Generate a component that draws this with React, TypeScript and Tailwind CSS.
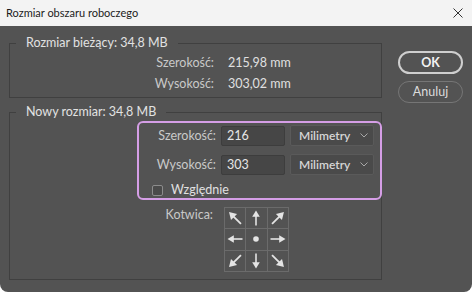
import React from "react";

// Anchor arrows: rotation in degrees for each cell, null = centre dot
const anchorCells: (number | null)[] = [-45, 0, 45, -90, null, 90, -135, 180, 135];

function AnchorArrow({ deg }: { deg: number | null }) {
  if (deg === null) {
    return (
      <svg width="14" height="14" viewBox="0 0 14 14">
        <circle cx="7" cy="7" r="2.8" fill="#e4e4e4" />
      </svg>
    );
  }
  const len = deg % 90 === 0 ? 16 : 18;
  return (
    <svg width={len} height={len} viewBox="0 0 16 16">
      <g transform={`rotate(${deg} 8 8)`}>
        <line x1="8" y1="15.5" x2="8" y2="5" stroke="#e4e4e4" strokeWidth="1.6" />
        <polygon points="8,0.5 4.2,6.8 11.8,6.8" fill="#e4e4e4" />
      </g>
    </svg>
  );
}

function Select() {
  return (
    <div className="ml-[5px] flex h-[21px] w-[84px] items-center justify-between rounded-[2px] border border-[#5a5a5a] bg-[#4a4a4a] pl-[8px] pr-[5px]">
      <span className="text-[12px] font-semibold leading-[16px] text-[#d6d6d6]">Milimetry</span>
      <svg width="8" height="5" viewBox="0 0 8 5">
        <polyline points="0.5,0.5 4,4 7.5,0.5" fill="none" stroke="#a8a8a8" strokeWidth="1" />
      </svg>
    </div>
  );
}

export default function App() {
  return (
    <div className="h-[292px] w-[472px] bg-white font-['Lato','Noto_Sans',sans-serif]">
      {/* title bar */}
      <div className="flex h-[26px] items-center justify-between bg-[#f3f3f3] pl-[6px] pr-[9px]">
        <span className="text-[11px] leading-[16px] text-[#1b1b1b]">Rozmiar obszaru roboczego</span>
        <svg width="10" height="10" viewBox="0 0 10 10">
          <path d="M0.5 0.5 L9.5 9.5 M9.5 0.5 L0.5 9.5" stroke="#333" strokeWidth="1" />
        </svg>
      </div>

      {/* body */}
      <div className="flex h-[266px] rounded-b-[8px] bg-[#535353] pl-[9px] pt-[9px] text-[12.5px] leading-[16px]">
        <div className="flex w-[373px] flex-col gap-[6px]">
          <fieldset className="border border-[#404040] pb-[3px] pt-[1px]">
            <legend className="ml-[6px] px-[10px] text-[#e2e2e2]">Rozmiar bieżący: 34,8 MB</legend>
            <div className="flex h-[21px] items-center">
              <span className="w-[204px] text-right text-[#c9c9c9]">Szerokość:</span>
              <span className="ml-[14px] text-[#e0e0e0]">215,98 mm</span>
            </div>
            <div className="flex h-[21px] items-center">
              <span className="w-[204px] text-right text-[#c9c9c9]">Wysokość:</span>
              <span className="ml-[14px] text-[#e0e0e0]">303,02 mm</span>
            </div>
          </fieldset>

          <fieldset className="border border-[#404040] pb-[7px] pt-[1px]">
            <legend className="ml-[6px] px-[10px] text-[#e2e2e2]">Nowy rozmiar: 34,8 MB</legend>
            <div className="-mr-px ml-[127px] rounded-[6px] border-2 border-[#d59ee6] pb-[2px] pt-[2px]">
              <div className="flex items-center">
                <span className="w-[77px] text-right text-[#c9c9c9]">Szerokość:</span>
                <div className="ml-[5px] flex h-[20px] w-[64px] items-center rounded-[2px] border border-[#3d3d3d] bg-[#464646] pl-[5px] text-[#e6e6e6]">
                  216
                </div>
                <Select />
              </div>
              <div className="mt-[8px] flex items-center">
                <span className="w-[77px] text-right text-[#c9c9c9]">Wysokość:</span>
                <div className="ml-[5px] flex h-[20px] w-[64px] items-center rounded-[2px] border border-[#3d3d3d] bg-[#464646] pl-[5px] text-[#e6e6e6]">
                  303
                </div>
                <Select />
              </div>
              <div className="mt-[9px] flex h-[12px] items-center pl-[13px]">
                <div className="h-[11px] w-[11px] rounded-[2px] border border-[#8c8c8c] bg-[#4a4a4a]" />
                <span className="ml-[8px] text-[#e0e0e0]">Względnie</span>
              </div>
            </div>

            <div className="mt-[7px] flex items-start">
              <span className="w-[203px] text-right text-[#c9c9c9]">Kotwica:</span>
              <div className="ml-[11px] grid h-[65px] w-[65px] grid-cols-3 grid-rows-3 gap-px bg-[#6b6b6b] p-px">
                {anchorCells.map((deg, i) => (
                  <div key={i} className="flex items-center justify-center bg-[#535353]">
                    <AnchorArrow deg={deg} />
                  </div>
                ))}
              </div>
            </div>
          </fieldset>
        </div>

        <div className="ml-[16px] flex w-[65px] flex-col gap-[7px] pt-[16px]">
          <button className="h-[23px] rounded-full border-2 border-[#cfcfcf] text-[12.5px] font-bold text-[#f2f2f2]">
            OK
          </button>
          <button className="h-[22px] rounded-full border border-[#767676] text-[12.5px] text-[#dcdcdc]">
            Anuluj
          </button>
        </div>
      </div>
    </div>
  );
}
